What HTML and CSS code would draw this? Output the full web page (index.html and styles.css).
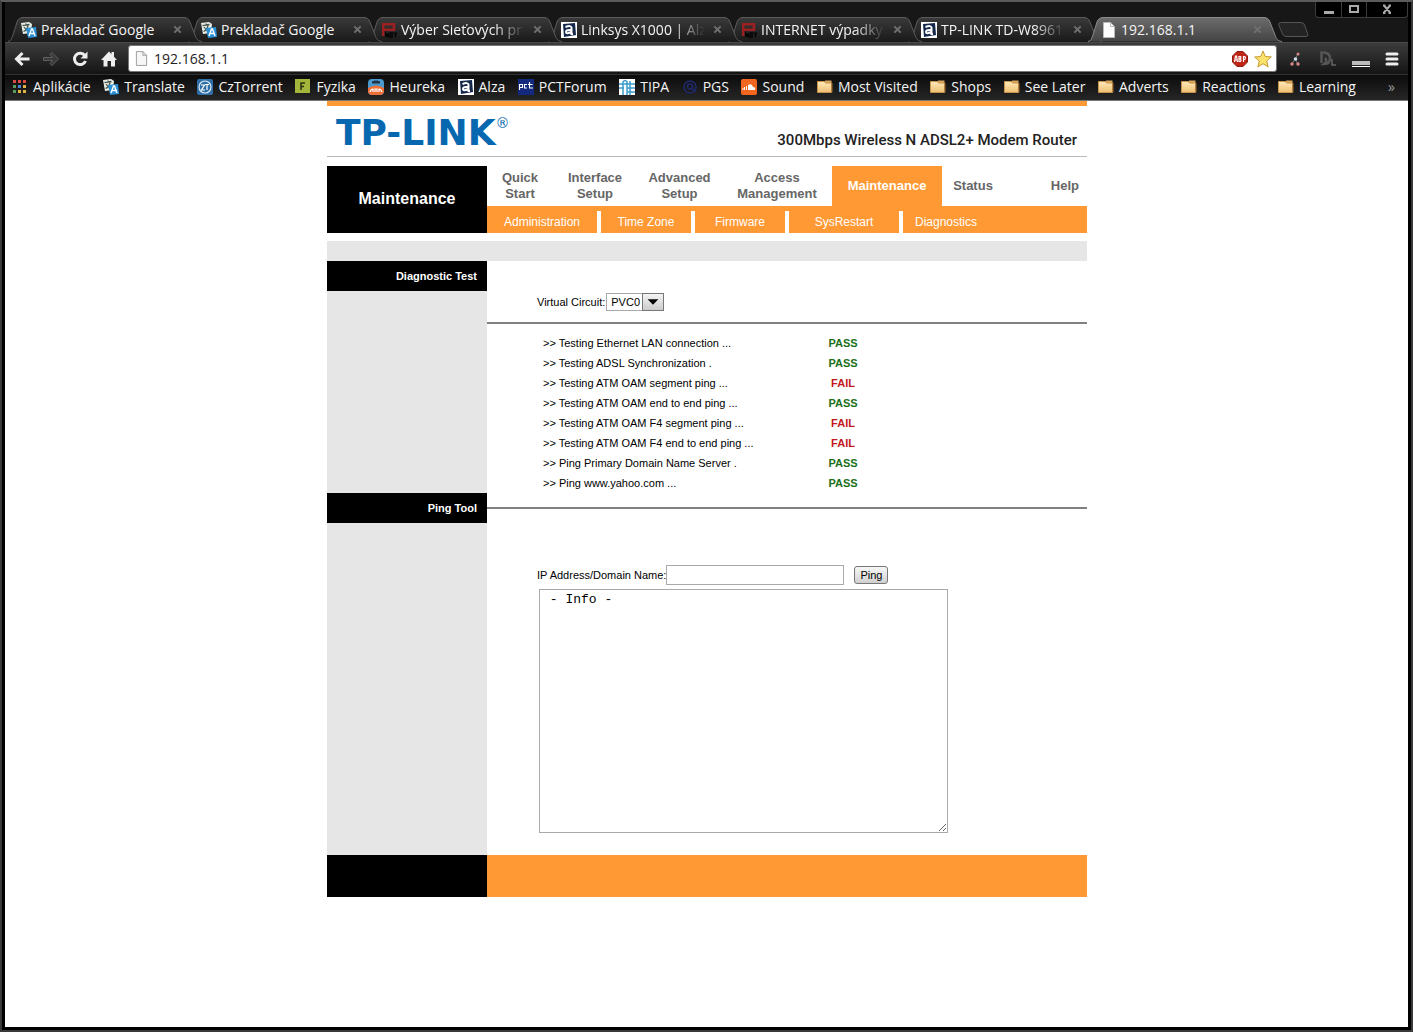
FILE: index.html
```html
<!DOCTYPE html>
<html lang="sk">

<head>
    <meta charset="UTF-8">
    <meta name="viewport" content="width=device-width, initial-scale=1.0">
    <title>192.168.1.1</title>
    <link rel="stylesheet" href="styles.css">
</head>

<body>

    <!-- Shared icons -->
    <svg class="sprite" aria-hidden="true">
        <linearGradient id="tabFill" x1="0" y1="0" x2="0" y2="1">
            <stop offset="0" stop-color="#3a3a3a" />
            <stop offset="1" stop-color="#1a1a1a" />
        </linearGradient>
        <linearGradient id="tabActive" x1="0" y1="0" x2="0" y2="1">
            <stop offset="0" stop-color="#6c6c6c" />
            <stop offset="1" stop-color="#444" />
        </linearGradient>
        <linearGradient id="folderFill" x1="0" y1="0" x2="0" y2="1">
            <stop offset="0" stop-color="#ffe9b8" />
            <stop offset="1" stop-color="#efbf72" />
        </linearGradient>
        <symbol id="tab" viewBox="0 0 194 25" preserveAspectRatio="none">
            <path d="M0 24.500C3 24 3.500 22 5 18L9 5Q10.500.500 15 .500H176Q180.500.500 182 5L187 18C188.500 22 189.500 24 194 24.500" />
        </symbol>
        <symbol id="translate" viewBox="0 0 16 16">
            <path fill="#e8eee4" d="M0 1L8 0l3 2-1 9-8 1z" />
            <path fill="none" stroke="#4b5750" stroke-width="1.300" d="M1.500 3.500l7-1M5 1.500v2M2.500 9.500C5 8.500 6.500 6 7 3.500M3 5q2 3 4 4" />
            <path fill="#2a8fd4" d="M5 6l10-1 1 10-9 1z" />
            <path fill="none" stroke="#fff" stroke-width="1.400" d="M8 14l2.500-7h1l2.500 7M9 11.500h4" />
        </symbol>
        <symbol id="pnet" viewBox="0 0 16 16">
            <path fill="none" stroke="#9c1f22" stroke-width="2.500" d="M2.200 14V2.200H13v5.600H3" />
            <path fill="none" stroke="#050505" stroke-width="1.400" d="M4.700 15v-4l2.600 4v-4M12 11H9.200v4H12M9 13h3M12.500 11.200H16M14.500 11v4" />
        </symbol>
        <symbol id="alza" viewBox="0 0 16 16">
            <path fill="#fff" d="M0 0h16v16H0z" />
            <path fill="#14284b" d="M2 2l12-1 1 12-12 2z" />
            <path fill="none" stroke="#fff" stroke-width="2" d="M4.500 5Q10 3 10.500 5.500V12h1.500M10.500 8Q5 7.500 5 10t5.500 0" />
        </symbol>
        <symbol id="page" viewBox="0 0 14 16">
            <path d="M1.500.500h7l4 4v11h-11z" />
            <path fill="none" d="M8.500.500v4h4" />
        </symbol>
        <symbol id="close" viewBox="0 0 10 10">
            <path fill="none" stroke-width="2.200" d="M1.500 1.500l7 7M8.500 1.500l-7 7" />
        </symbol>
        <symbol id="folder" viewBox="0 0 16 16">
            <path fill="#d9a760" d="M8 1.500h6.500v3H8z" />
            <path fill="url(#folderFill)" stroke="#c8934c" d="M.500 2.500h7l1 1.500h6v9.500H.500z" />
            <path fill="#9b6b32" d="M14.500 4h1v9.500h-1z" />
        </symbol>
    </svg>

    <header class="browser">
        <div class="tab-strip">
            <div class="tab">
                <svg class="tab-shape"><use href="#tab" /></svg>
                <svg class="favicon"><use href="#translate" /></svg>
                <span class="tab-title">Prekladač Google</span>
                <button class="tab-close" aria-label="Close tab"><svg><use href="#close" /></svg></button>
            </div>
            <div class="tab">
                <svg class="tab-shape"><use href="#tab" /></svg>
                <svg class="favicon"><use href="#translate" /></svg>
                <span class="tab-title">Prekladač Google</span>
                <button class="tab-close" aria-label="Close tab"><svg><use href="#close" /></svg></button>
            </div>
            <div class="tab">
                <svg class="tab-shape"><use href="#tab" /></svg>
                <svg class="favicon"><use href="#pnet" /></svg>
                <span class="tab-title fade">Výber Sieťových pr</span>
                <button class="tab-close" aria-label="Close tab"><svg><use href="#close" /></svg></button>
            </div>
            <div class="tab">
                <svg class="tab-shape"><use href="#tab" /></svg>
                <svg class="favicon"><use href="#alza" /></svg>
                <span class="tab-title fade">Linksys X1000 | Alza</span>
                <button class="tab-close" aria-label="Close tab"><svg><use href="#close" /></svg></button>
            </div>
            <div class="tab">
                <svg class="tab-shape"><use href="#tab" /></svg>
                <svg class="favicon"><use href="#pnet" /></svg>
                <span class="tab-title fade">INTERNET výpadky</span>
                <button class="tab-close" aria-label="Close tab"><svg><use href="#close" /></svg></button>
            </div>
            <div class="tab">
                <svg class="tab-shape"><use href="#tab" /></svg>
                <svg class="favicon"><use href="#alza" /></svg>
                <span class="tab-title fade">TP-LINK TD-W8961</span>
                <button class="tab-close" aria-label="Close tab"><svg><use href="#close" /></svg></button>
            </div>
            <div class="tab active">
                <svg class="tab-shape"><use href="#tab" /></svg>
                <svg class="favicon page-icon"><use href="#page" /></svg>
                <span class="tab-title">192.168.1.1</span>
                <button class="tab-close" aria-label="Close tab"><svg><use href="#close" /></svg></button>
            </div>
            <button class="new-tab" aria-label="New tab">
                <svg width="31" height="15" viewBox="0 0 31 15"><path fill="#242424" stroke="#555" d="M2.500.500H23Q25.500.500 26.500 3L30 12.500Q30 14.500 28 14.500H8Q5.500 14.500 4.500 12L.800 3Q.500.500 2.500.500z" /></svg>
            </button>
            <div class="window-buttons">
                <button aria-label="Minimize"><svg width="12" height="12" viewBox="0 0 12 12"><path fill="#aaa" d="M1 7h10v3H1z" /></svg></button>
                <button aria-label="Maximize"><svg width="12" height="12" viewBox="0 0 12 12"><path fill="none" stroke="#aaa" stroke-width="2" d="M2 2h8v6H2z" /></svg></button>
                <button class="wide" aria-label="Close"><svg width="12" height="12" viewBox="0 0 12 12"><path fill="none" stroke="#aaa" stroke-width="2" d="M3 1.500l6 7M9 1.500l-6 7M2 1.500h2.500M7.500 1.500H10M2 9h2.500M7.500 9H10" /></svg></button>
            </div>
        </div>

        <div class="toolbar">
            <button class="tool" aria-label="Back"><svg viewBox="0 0 16 16"><path fill="none" stroke="#eee" stroke-width="3" d="M15.500 8H3M8.500 2L2.500 8l6 6" /></svg></button>
            <button class="tool" aria-label="Forward"><svg viewBox="0 0 16 16"><path fill="#3a3a3a" stroke="#606060" d="M.500 6.500h9L7 3.500 8.800 1.500 15.500 8l-6.700 6.500L7 12.500l2.500-3h-9z" /></svg></button>
            <button class="tool" aria-label="Reload"><svg viewBox="0 0 16 16"><path fill="none" stroke="#eee" stroke-width="3" d="M12.800 4.500A5.700 5.700 0 1 0 13.500 10" /><path fill="#eee" d="M15.500.500v7h-7z" /></svg></button>
            <button class="tool" aria-label="Home"><svg viewBox="0 0 16 16"><path fill="#eee" d="M8 .500l2.500 2.700V1h2.500v4.800l3 3.200h-2v6.500h-4V10H6.500v5.500H2.500V9H0z" /></svg></button>
            <div class="omnibox">
                <svg class="page-outline"><use href="#page" /></svg>
                <input type="text" aria-label="Address" value="192.168.1.1">
                <svg width="16" height="16" viewBox="0 0 16 16">
                    <path fill="#c02618" stroke="#8e1a10" d="M5 .500h6L15.500 5v6L11 15.500H5L.500 11V5z" />
                    <path fill="none" stroke="#fff" stroke-width="1.200" d="M2.500 11l1-6h1l1 6M3 9h2M7 5v5.500h1.500q1-1.500 0-2.700H7M7 5.500h1.500q1 1 0 2M11.500 11V5.500h1.300q1.400 1.400 0 3h-1" />
                </svg>
                <svg width="18" height="18" viewBox="0 0 18 18"><path fill="#fbe36c" stroke="#c59a33" d="M9 1l2.300 5.500 6 .400-4.600 4 1.500 6L9 13.700 3.800 17l1.500-6L.700 7l6-.500z" /></svg>
            </div>
            <div class="extensions">
                <button aria-label="Molecule"><svg width="16" height="16" viewBox="0 0 16 16"><path fill="none" stroke="#777" d="M11 3L8 8l-3 5M8 8l3 5" /><g fill="#d88"><circle cx="11" cy="3" r="1.500" /><circle cx="5" cy="13" r="1.700" /><circle cx="11" cy="13" r="1.700" /></g><circle cx="8.500" cy="8" r="1.800" fill="#cde" /></svg></button>
                <button aria-label="Downloader"><svg width="20" height="18" viewBox="0 0 20 18"><path fill="none" stroke="#555" stroke-width="2.500" d="M4.500 13V2.500H7Q13 3 13 8.500T7 14q4-3 1-6" /><path fill="none" stroke="#666" stroke-width="1.500" d="M15 9v6h4" /></svg></button>
                <button aria-label="Panel"><svg width="20" height="16" viewBox="0 0 20 16"><path fill="#bbb" d="M1 10h18v4H1z" /><path fill="#fff" d="M1 15h18v1H1z" /></svg></button>
                <button aria-label="Menu"><svg width="14" height="16" viewBox="0 0 14 16"><path stroke="#eee" stroke-width="3" stroke-linecap="round" d="M2 3h10M2 8h10M2 13h10" /></svg></button>
            </div>
        </div>

        <nav class="bookmarks">
            <div class="links">
                <a href="#"><svg viewBox="0 0 16 16"><path fill="#d64a3f" d="M1 1h3v3H1zM6 1h3v3H6zM11 1h3v3h-3z" /><path fill="#56a05c" d="M1 6h3v3H1zM1 11h3v3H1z" /><path fill="#4a86d8" d="M6 6h3v3H6z" /><path fill="#e0b43e" d="M11 6h3v3h-3zM6 11h3v3H6zM11 11h3v3h-3z" /></svg>Aplikácie</a>
                <a href="#"><svg><use href="#translate" /></svg>Translate</a>
                <a href="#"><svg viewBox="0 0 16 16"><rect width="16" height="16" rx="2" fill="#2f6ea6" /><circle cx="8" cy="8" r="6" fill="none" stroke="#dbe9f5" stroke-width="1.200" /><path fill="none" stroke="#fff" stroke-width="1.200" d="M4 6h3.500L4.500 11H8M8 5.500h4M10 5.500V11" /></svg>CzTorrent</a>
                <a href="#"><svg viewBox="0 0 16 16"><path fill="#a3b53a" d="M0 0h15v14H0z" /><path fill="none" stroke="#2b3310" stroke-width="1.500" d="M6 11V4h4M6 7.500h3" /></svg>Fyzika</a>
                <a href="#"><svg viewBox="0 0 16 16"><rect width="16" height="16" rx="4" fill="#4a9ad0" /><path fill="#ee6e36" d="M0 9q8-5 16 0v4q-1 3-4 3H4q-3 0-4-3z" /><path fill="#1f3348" d="M4 2.500q4-2 8 0v2H4z" /><path fill="none" stroke="#fff" stroke-width="1.200" d="M2 13q1-3 3-3v3M7 13v-3h2v3M11 13v-3q2 0 3 3" /></svg>Heureka</a>
                <a href="#"><svg><use href="#alza" /></svg>Alza</a>
                <a href="#"><svg viewBox="0 0 16 16"><path fill="#12297d" d="M0 0h16v16H0z" /><path fill="none" stroke="#fff" stroke-width="1.100" d="M1.500 11V5.500h3v3h-3M9 5.500H6.500V9H9M11.500 3v6h3.500M10 5.500h4.500" /></svg>PCTForum</a>
                <a href="#"><svg viewBox="0 0 16 16"><path fill="#fff" d="M0 0h16v16H0z" /><path fill="none" stroke="#3b9ccc" stroke-width="1.500" d="M0 5h16M4 16V3q2-3 4 0v13M11 2v14M0 9h5M8 9h8M8 13h8" /></svg>TIPA</a>
                <a href="#"><svg viewBox="0 0 16 16"><g fill="none" stroke="#20296d" stroke-width="1.500"><circle cx="8" cy="8" r="6" /><circle cx="8" cy="7.500" r="2.500" /><path d="M10.500 7v3l3 3" /></g></svg>PGS</a>
                <a href="#"><svg viewBox="0 0 16 16"><rect width="16" height="16" rx="2" fill="#f2661f" /><path fill="#fff" d="M7 11V6q4-2 5 2 3 0 2 3zM5 7h1v4H5zM3 8h1v3H3zM1.500 9h1v2h-1z" /></svg>Sound</a>
                <a href="#"><svg><use href="#folder" /></svg>Most Visited</a>
                <a href="#"><svg><use href="#folder" /></svg>Shops</a>
                <a href="#"><svg><use href="#folder" /></svg>See Later</a>
                <a href="#"><svg><use href="#folder" /></svg>Adverts</a>
                <a href="#"><svg><use href="#folder" /></svg>Reactions</a>
                <a href="#"><svg><use href="#folder" /></svg>Learning</a>
            </div>
            <button class="more" aria-label="More bookmarks">»</button>
        </nav>
    </header>

    <main class="viewport">
        <div class="router">
            <div class="brand">
                <div class="logo">TP-LINK<sup>®</sup></div>
                <div class="model">300Mbps Wireless N ADSL2+ Modem Router</div>
            </div>

            <div class="navigation">
                <h1>Maintenance</h1>
                <div class="menus">
                    <nav class="menu">
                        <a href="#">Quick<br>Start</a>
                        <a href="#">Interface<br>Setup</a>
                        <a href="#">Advanced<br>Setup</a>
                        <a href="#">Access<br>Management</a>
                        <a href="#" class="current">Maintenance</a>
                        <a href="#">Status</a>
                        <a href="#" class="help">Help</a>
                    </nav>
                    <nav class="submenu">
                        <a href="#" class="long">Administration</a>
                        <a href="#">Time Zone</a>
                        <a href="#">Firmware</a>
                        <a href="#" class="long">SysRestart</a>
                        <a href="#">Diagnostics</a>
                    </nav>
                </div>
            </div>

            <div class="divider"></div>

            <!-- Diagnostic test -->
            <section class="row">
                <h2>Diagnostic Test</h2>
                <div class="content">
                    <div class="circuit">
                        <label for="pvc">Virtual Circuit:</label>
                        <span class="select">
                            <select id="pvc">
                                <option>PVC0</option>
                                <option>PVC1</option>
                            </select>
                            <svg viewBox="0 0 22 18"><path d="M5 6h12l-6 6z" /></svg>
                        </span>
                    </div>
                    <table class="tests">
                        <tbody>
                            <tr><td>&gt;&gt; Testing Ethernet LAN connection ...</td><td class="pass">PASS</td></tr>
                            <tr><td>&gt;&gt; Testing ADSL Synchronization .</td><td class="pass">PASS</td></tr>
                            <tr><td>&gt;&gt; Testing ATM OAM segment ping ...</td><td class="fail">FAIL</td></tr>
                            <tr><td>&gt;&gt; Testing ATM OAM end to end ping ...</td><td class="pass">PASS</td></tr>
                            <tr><td>&gt;&gt; Testing ATM OAM F4 segment ping ...</td><td class="fail">FAIL</td></tr>
                            <tr><td>&gt;&gt; Testing ATM OAM F4 end to end ping ...</td><td class="fail">FAIL</td></tr>
                            <tr><td>&gt;&gt; Ping Primary Domain Name Server .</td><td class="pass">PASS</td></tr>
                            <tr><td>&gt;&gt; Ping www.yahoo.com ...</td><td class="pass">PASS</td></tr>
                        </tbody>
                    </table>
                </div>
            </section>

            <!-- Ping tool -->
            <section class="row">
                <h2>Ping Tool</h2>
                <div class="content">
                    <hr>
                    <form class="ping">
                        <div class="ping-line">
                            <label for="host">IP Address/Domain Name:</label>
                            <input type="text" id="host">
                            <button type="button">Ping</button>
                        </div>
                        <textarea aria-label="Info"> - Info -</textarea>
                    </form>
                </div>
            </section>

            <div class="bottom"></div>
        </div>
    </main>

</body>

</html>
```
FILE: styles.css
```css
* {
    box-sizing: border-box;
}

body {
    margin: 0;
    min-height: 100vh;
    display: flex;
    flex-direction: column;
    padding: 0 3px 3px;
    border: 2px solid #3a3a3a;
    border-top-color: #5c5c5c;
    background: #000;
    font-family: "Liberation Sans", Arial, sans-serif;
    font-size: 11px;
    color: #000;
}

a {
    color: inherit;
    text-decoration: none;
}

button {
    padding: 0;
    border: none;
    background: none;
}

svg {
    display: block;
    flex: none;
}

.sprite {
    position: absolute;
    width: 0;
    height: 0;
}

/* Browser window */
.browser {
    font-family: "Open Sans", "Noto Sans", sans-serif;
    font-size: 14px;
    color: #f4f4f4;
    border-bottom: 1px solid #777;
}

.tab-strip {
    display: flex;
    align-items: flex-end;
    height: 40px;
    padding-left: 3px;
    background: #171717;
}

.tab {
    position: relative;
    flex: 0 1 194px;
    min-width: 0;
    height: 25px;
    display: flex;
    align-items: center;
    padding: 0 20px 0 13px;
}

.tab + .tab {
    margin-left: -14px;
}

/* every tab lies over the one to its right */
.tab:nth-child(1) { z-index: 6; }
.tab:nth-child(2) { z-index: 5; }
.tab:nth-child(3) { z-index: 4; }
.tab:nth-child(4) { z-index: 3; }
.tab:nth-child(5) { z-index: 2; }
.tab:nth-child(6) { z-index: 1; }
.tab.active { z-index: 7; }

.tab-shape {
    position: absolute;
    inset: 0;
    width: 100%;
    height: 100%;
    fill: url(#tabFill);
    stroke: #5a5a5a;
}

.active .tab-shape {
    fill: url(#tabActive);
    stroke: #8a8a8a;
}

.favicon {
    position: relative;
    width: 16px;
    height: 16px;
}

.page-icon {
    fill: #fff;
    stroke: #bbb;
}

.tab-title {
    position: relative;
    flex: 1;
    margin: 0 8px 0 4px;
    overflow: hidden;
    white-space: nowrap;
}

.tab-title.fade {
    mask-image: linear-gradient(to right, #000 75%, transparent);
}

.tab-close {
    position: relative;
}

.tab-close svg {
    width: 9px;
    height: 9px;
    stroke: #707070;
}

.new-tab {
    margin: 0 0 5px -4px;
}

.window-buttons {
    display: flex;
    align-self: flex-start;
    margin-left: auto;
    border: 1px solid #3c3c3c;
    border-top: none;
    border-radius: 0 0 4px 4px;
    background: #000;
}

.window-buttons button {
    display: flex;
    align-items: center;
    justify-content: center;
    width: 25px;
    height: 15px;
}

.window-buttons button + button {
    border-left: 1px solid #3c3c3c;
}

.window-buttons .wide {
    width: 41px;
}

.toolbar {
    display: flex;
    align-items: center;
    height: 32px;
    padding: 0 9px;
    border-top: 1px solid #4a4a4a;
    background: linear-gradient(#3c3c3c, #141414);
}

.tool {
    margin-right: 13px;
}

.tool svg {
    width: 16px;
    height: 16px;
}

.omnibox {
    flex: 1;
    display: flex;
    align-items: center;
    gap: 6px;
    height: 27px;
    margin-left: -2px;
    padding: 0 4px 0 6px;
    border: 1px solid #777;
    border-radius: 3px;
    background: #fff;
}

.page-outline {
    width: 13px;
    height: 15px;
    fill: #f6f6f6;
    stroke: #999;
}

.omnibox input {
    flex: 1;
    min-width: 0;
    padding: 0;
    border: none;
    outline: none;
    background: none;
    font: inherit;
    color: #222;
}

.extensions {
    display: flex;
    align-items: center;
    gap: 14px;
    padding-left: 10px;
}

.bookmarks {
    display: flex;
    align-items: center;
    gap: 32px;
    height: 26px;
    padding: 0 13px 2px 7px;
    border-top: 1px solid #333;
    background: linear-gradient(#0c0c0c, #262626);
}

.links {
    flex: 1;
    display: flex;
    justify-content: space-between;
}

.links a {
    display: flex;
    align-items: center;
    gap: 5px;
    white-space: nowrap;
}

.links svg {
    width: 16px;
    height: 16px;
}

.more {
    font: inherit;
    color: #999;
}

/* Router page */
.viewport {
    flex: 1;
    padding-left: 1px;
    background: #fff;
}

.router {
    width: 760px;
    max-width: 100%;
    margin: 0 auto;
}

.brand {
    display: flex;
    justify-content: space-between;
    align-items: center;
    height: 56px;
    padding: 0 10px 0 9px;
    border-top: 5px solid #f93;
    border-bottom: 1px solid #bbb;
}

.logo {
    padding-top: 4px;
    font: bold 36px/36px "DejaVu Sans", Verdana, sans-serif;
    color: #0768b0;
}

.logo sup {
    font-size: 14px;
    font-weight: normal;
    line-height: 16px;
    vertical-align: top;
}

.model {
    padding-top: 18px;
    font: 500 15px/20px Roboto, Arial, sans-serif;
    color: #222;
}

.navigation {
    display: flex;
    margin: 9px 0 8px;
}

h1 {
    flex: none;
    width: 160px;
    margin: 0;
    background: #000;
    color: #fff;
    font-size: 16px;
    line-height: 66px;
    text-align: center;
}

.menus {
    flex: 1;
}

.menu {
    display: grid;
    grid-template-columns: 66px 84px 85px 110px 110px 62px 1fr;
    align-items: center;
    height: 40px;
    color: #666;
    font-size: 13px;
    font-weight: bold;
    line-height: 16px;
    text-align: center;
}

.menu .current {
    background: #f93;
    color: #fff;
    line-height: 40px;
}

.menu .help {
    padding-right: 8px;
    text-align: right;
}

.submenu {
    display: flex;
    gap: 4px;
    height: 27px;
    border-top: 5px solid #f93;
    color: #fff;
    font-size: 12px;
    line-height: 22px;
    text-align: center;
}

.submenu a {
    width: 90px;
    background: #f93;
}

.submenu .long {
    width: 110px;
}

.submenu a:last-child {
    flex: 1;
    padding-left: 12px;
    text-align: left;
}

.divider {
    height: 20px;
    background: #e6e6e6;
}

.row {
    display: flex;
    background: linear-gradient(to right, #e6e6e6 160px, #fff 160px);
}

h2 {
    flex: none;
    width: 160px;
    height: 30px;
    margin: 0;
    padding-right: 10px;
    background: #000;
    color: #fff;
    font-size: 11px;
    line-height: 30px;
    text-align: right;
}

.content {
    flex: 1;
}

.circuit {
    display: flex;
    align-items: center;
    gap: 1px;
    padding: 32px 0 11px 50px;
    border-bottom: 2px solid #808080;
}

.select {
    position: relative;
}

select {
    display: block;
    appearance: none;
    width: 58px;
    height: 18px;
    padding: 0 4px;
    border: 1px solid #a9a9a9;
    border-radius: 0;
    background: #fff;
    font: inherit;
}

/* arrow lies over the right end of the select */
.select svg {
    position: absolute;
    top: 0;
    right: 0;
    width: 22px;
    height: 18px;
    border: 1px solid #777;
    background: linear-gradient(#f4f4f4, #ccc);
    pointer-events: none;
}

.tests {
    margin: 9px 0 0 56px;
    border-collapse: collapse;
}

.tests td {
    width: 250px;
    height: 20px;
    padding: 0;
}

.tests .pass,
.tests .fail {
    width: 100px;
    font-weight: bold;
    text-align: center;
}

.pass {
    color: #1a701a;
}

.fail {
    color: #c4181f;
}

hr {
    height: 2px;
    margin: 14px 0 56px;
    border: none;
    background: #808080;
}

.ping {
    padding: 0 0 22px 50px;
}

.ping-line {
    display: flex;
    align-items: center;
    margin-bottom: 4px;
}

.ping-line input {
    width: 178px;
    height: 20px;
    border: 1px solid #a9a9a9;
}

.ping-line button {
    width: 34px;
    height: 18px;
    margin-left: 10px;
    border: 1px solid #777;
    border-radius: 3px;
    background: linear-gradient(#f6f6f6, #d0d0d0);
    font: inherit;
}

textarea {
    display: block;
    width: 409px;
    height: 244px;
    margin-left: 2px;
    padding: 2px;
    border: 1px solid #a9a9a9;
    font: 13px/16px "Liberation Mono", "Courier New", monospace;
}

.bottom {
    height: 42px;
    background: linear-gradient(to right, #000 160px, #f93 160px);
}
```
